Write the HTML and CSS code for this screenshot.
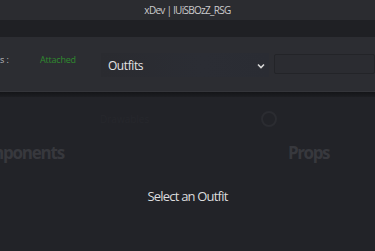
FILE: index.html
```html
<!DOCTYPE html>
<html>
<head>
<meta charset="utf-8">
<link rel="stylesheet" href="styles.css">
</head>
<body>
<div class="app">
  <div class="titlebar">xDev | lUiSBOzZ_RSG</div>
  <div class="band"></div>
  <div class="toolbar">
    <div class="status-label"><span>Status :</span></div>
    <div class="status">Attached</div>
    <div class="select">
      <span class="select-text">Outfits</span>
      <svg class="chev" width="8" height="6" viewBox="0 0 8 6"><path d="M1 1.5 L4 4.5 L7 1.5" fill="none" stroke="#d8d8d8" stroke-width="1.6"/></svg>
    </div>
    <div class="input"></div>
  </div>
  <div class="shadow"></div>
  <div class="content">
    <div class="faint-row">
      <div class="faint-a">Drawables</div>
      <div class="faint-icon"></div>
    </div>
    <div class="heads">
      <div class="head-left"><span>Components</span></div>
      <div class="head-right">Props</div>
    </div>
    <div class="empty">Select an Outfit</div>
  </div>
</div>
</body>
</html>
```
FILE: styles.css
```css
* { box-sizing: border-box; }
html, body { margin: 0; padding: 0; }
body {
  width: 375px;
  height: 251px;
  overflow: hidden;
  background: #222328;
  font-family: "Open Sans", "Noto Sans", sans-serif;
}
.app { display: flex; flex-direction: column; height: 251px; }
.titlebar {
  height: 20px;
  background: #2b2c30;
  color: #cbcbcd;
  font-size: 10px;
  letter-spacing: -0.7px;
  display: flex;
  align-items: center;
  justify-content: center;
}
.band { height: 17px; background: #1f2024; }
.toolbar {
  height: 55px;
  background: #2c2d32;
  border-bottom: 1px solid #34353a;
  display: flex;
  align-items: center;
}
.status-label {
  width: 9px;
  display: flex;
  justify-content: flex-end;
  margin-top: -10px;
  color: #bcbcbf;
  font-size: 9px;
  white-space: nowrap;
}
.status {
  margin-left: 31px;
  margin-top: -10px;
  color: #2f8a2f;
  font-size: 9px;
  letter-spacing: -0.2px;
  width: 63px;
}
.select {
  width: 174px;
  height: 24px;
  margin-top: 2px;
  background: linear-gradient(90deg, #2a2b30 0%, #2b2d34 60%, #2a2c33 100%);
  display: flex;
  align-items: center;
  padding-left: 7px;
  padding-right: 4px;
}
.select-text {
  color: #e4e4e6;
  font-size: 12px;
  letter-spacing: -0.4px;
  flex: 1;
}
.chev { margin-top: 1px; }
.input {
  width: 104px;
  height: 20px;
  margin-left: 5px;
  background: #2b2c31;
  border: 1px solid #232428;
  border-radius: 2px;
}
.shadow {
  height: 5px;
  background: linear-gradient(#141518, #1d1e22);
}
.content {
  flex: 1;
  display: flex;
  flex-direction: column;
}
.faint-row {
  display: flex;
  align-items: center;
  height: 30px;
  margin-top: 7px;
}
.faint-a {
  margin-left: 100px;
  width: 155px;
  color: #26272c;
  font-size: 10px;
}
.faint-icon {
  width: 16px;
  height: 16px;
  border: 2px solid #2b2c31;
  border-radius: 50%;
  margin-left: 6px;
}
.heads {
  display: flex;
  align-items: center;
  height: 30px;
  margin-top: 3px;
}
.head-left {
  width: 64px;
  display: flex;
  justify-content: flex-end;
  color: #37383d;
  font-size: 17px;
  font-weight: 700;
  white-space: nowrap;
  letter-spacing: -1.2px;
}
.head-right {
  margin-left: 224px;
  color: #37383d;
  font-size: 17px;
  font-weight: 700;
  letter-spacing: -1.4px;
}
.empty {
  margin-top: 20px;
  text-align: center;
  color: #dcdcde;
  font-size: 13px;
  letter-spacing: -0.8px;
}
```
